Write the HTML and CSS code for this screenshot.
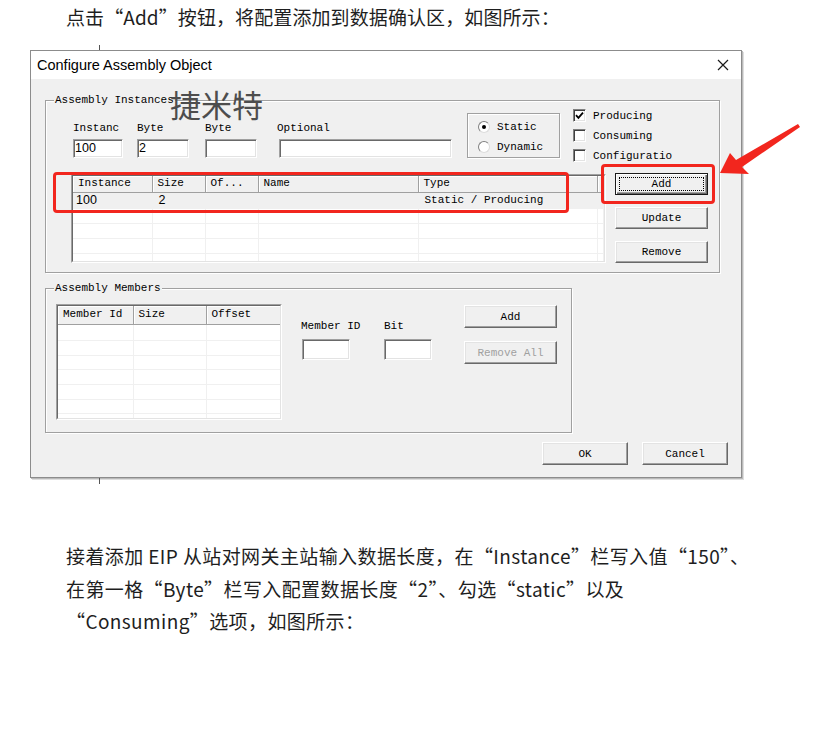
FILE: index.html
```html
<!DOCTYPE html>
<html lang="zh-CN">
<head>
<meta charset="utf-8">
<title>Configure Assembly Object</title>
<link rel="stylesheet" href="styles.css">
</head>
<body>
<div class="page">
  <p class="para para-top">点击“Add”按钮，将配置添加到数据确认区，如图所示：</p>

  <div class="dialog">
    <div class="titlebar">
      <span class="title">Configure Assembly Object</span>
      <svg class="close" width="12" height="12" viewBox="0 0 12 12"><path d="M1 1 L11 11 M11 1 L1 11" stroke="#1a1a1a" stroke-width="1.2" fill="none"/></svg>
    </div>
    <div class="dlg-body">
      <div class="group group-inst">
        <span class="group-title">Assembly Instances</span>
        <div class="inst-top">
          <div class="field f-inst"><span class="lbl">Instanc</span><div class="edit">100</div></div>
          <div class="field f-byte1"><span class="lbl">Byte</span><div class="edit">2</div></div>
          <div class="field f-byte2"><span class="lbl">Byte</span><div class="edit"></div></div>
          <div class="field f-opt"><span class="lbl">Optional</span><div class="edit"></div></div>
          <div class="radio-box">
            <div class="radio-row"><span class="radio checked"></span><span class="rlabel">Static</span></div>
            <div class="radio-row"><span class="radio"></span><span class="rlabel">Dynamic</span></div>
          </div>
          <div class="checks">
            <div class="check-row"><span class="checkbox"><svg width="9" height="9" viewBox="0 0 9 9"><path d="M1 4.2 L3.4 6.8 L8 1.6" stroke="#000" stroke-width="1.8" fill="none"/></svg></span><span>Producing</span></div>
            <div class="check-row"><span class="checkbox"></span><span>Consuming</span></div>
            <div class="check-row"><span class="checkbox"></span><span>Configuratio</span></div>
          </div>
        </div>
        <div class="inst-bottom">
          <div class="listview lv-inst">
            <div class="lv-inner">
              <table class="lv-table">
                <colgroup><col class="c-i1"><col class="c-i2"><col class="c-i3"><col class="c-i4"><col class="c-i5"><col></colgroup>
                <thead><tr><th class="first">Instance</th><th>Size</th><th>Of...</th><th>Name</th><th>Type</th><th></th></tr></thead>
                <tbody>
                  <tr class="sel r-first"><td class="first num">100</td><td class="num">2</td><td></td><td></td><td>Static / Producing</td><td></td></tr>
                  <tr><td class="first"></td><td></td><td></td><td></td><td></td><td></td></tr>
                  <tr><td class="first"></td><td></td><td></td><td></td><td></td><td></td></tr>
                  <tr><td class="first"></td><td></td><td></td><td></td><td></td><td></td></tr>
                  <tr><td class="first"></td><td></td><td></td><td></td><td></td><td></td></tr>
                </tbody>
              </table>
            </div>
          </div>
          <div class="btn-col">
            <button class="btn btn-default">Add<span class="focus-rect"></span></button>
            <button class="btn">Update</button>
            <button class="btn">Remove</button>
          </div>
        </div>
      </div>

      <div class="group group-mem">
        <span class="group-title">Assembly Members</span>
        <div class="mem-content">
          <div class="listview lv-mem">
            <div class="lv-inner">
              <table class="lv-table mem-table">
                <colgroup><col class="c-m1"><col class="c-m2"><col class="c-m3"></colgroup>
                <thead><tr><th class="first">Member Id</th><th>Size</th><th>Offset</th></tr></thead>
                <tbody>
                  <tr class="r-first"><td></td><td></td><td></td></tr>
                  <tr><td></td><td></td><td></td></tr>
                  <tr><td></td><td></td><td></td></tr>
                  <tr><td></td><td></td><td></td></tr>
                  <tr><td></td><td></td><td></td></tr>
                  <tr><td></td><td></td><td></td></tr>
                  <tr><td></td><td></td><td></td></tr>
                </tbody>
              </table>
            </div>
          </div>
          <div class="mem-fields">
            <div class="field f-mid"><span class="lbl">Member ID</span><div class="edit"></div></div>
            <div class="field f-bit"><span class="lbl">Bit</span><div class="edit"></div></div>
          </div>
          <div class="mem-btns">
            <button class="btn">Add</button>
            <button class="btn btn-disabled">Remove All</button>
          </div>
        </div>
      </div>

      <div class="dlg-buttons">
        <button class="btn btn-wide">OK</button>
        <button class="btn btn-wide">Cancel</button>
      </div>
    </div>
  </div>

  <p class="para para-bottom">接着添加 EIP 从站对网关主站输入数据长度，在“Instance”栏写入值“150”、<br>在第一格“Byte”栏写入配置数据长度“2”、勾选“static”以及<br>“Consuming”选项，如图所示：</p>

  <div class="watermark">捷米特</div>
  <div class="redbox rb-table"></div>
  <div class="redbox rb-add"></div>
  <svg class="arrow" width="110" height="70" viewBox="700 115 110 70">
    <polygon points="720,173 730,153 736,160 798,124 800,127 742,167 749,174" fill="#f2261e"/>
  </svg>
</div>
</body>
</html>
```

FILE: styles.css
```css
* { box-sizing: border-box; }
html, body { margin: 0; padding: 0; background: #fff; }
body { font-family: "Noto Sans CJK SC", "Noto Sans", sans-serif; }

.page { position: relative; width: 817px; height: 745px; overflow: hidden; }

.para {
  margin: 0;
  padding-left: 66px;
  font-family: "Noto Sans CJK SC", sans-serif;
  font-size: 19px;
  line-height: 33px;
  color: #1e1e1e;
  white-space: nowrap;
}
.para-top { height: 33px; letter-spacing: 0.1px; }
.para-bottom { margin-top: 62px; line-height: 32.5px; letter-spacing: 0.4px; }

/* dialog */
.dialog {
  position: relative;
  margin: 17px 0 0 30px;
  width: 712px;
  height: 428px;
  border: 1px solid #8c8c8c;
  box-shadow: 1px 1px 0 #b9b9b9, 2px 2px 0 #dedede;
  background: #f0f0f0;
  font-family: "Liberation Mono", monospace;
  font-size: 11px;
  color: #000;
}
.dialog::before, .dialog::after {
  content: "";
  position: absolute;
  left: 68px;
  width: 1px;
  background: #555;
}
.dialog::before { top: -6px; height: 5px; }
.dialog::after { bottom: -7px; height: 6px; }

.titlebar {
  height: 28px;
  background: #fff;
  display: flex;
  align-items: center;
  justify-content: space-between;
  padding: 0 12px 0 6px;
}
.title { font-family: "Liberation Sans", Arial, sans-serif; font-size: 14.5px; color: #000; }
.close { display: block; }

.dlg-body { padding: 21px 0 0 14px; }

.group {
  position: relative;
  border: 1px solid #a0a0a0;
  box-shadow: inset 1px 1px 0 #fff, 1px 1px 0 #fff;
}
.group-title {
  position: absolute;
  top: -7px;
  left: 8px;
  padding: 0 1px;
  background: #f0f0f0;
  line-height: 12px;
  white-space: nowrap;
}
.group-inst { width: 675px; height: 173px; }
.group-mem { width: 527px; height: 145px; margin-top: 15px; }

.inst-top {
  display: flex;
  align-items: flex-start;
  margin-top: 8px;
  padding-left: 27px;
  height: 54px;
}
.field { display: flex; flex-direction: column; }
.lbl { margin-top: 13px; height: 12px; line-height: 12px; white-space: nowrap; }
.edit {
  margin-top: 5px;
  height: 19px;
  background: #fff;
  border: 1px solid;
  border-color: #a0a0a0 #fff #fff #a0a0a0;
  box-shadow: inset 1px 1px 0 #696969, inset -1px -1px 0 #e3e3e3;
  font-family: "Liberation Sans", Arial, sans-serif;
  font-size: 12.5px;
  line-height: 17px;
  padding-left: 1px;
}
.f-inst { width: 50px; }
.f-byte1 { width: 52px; margin-left: 14px; }
.f-byte2 { width: 52px; margin-left: 16px; }
.f-opt { width: 173px; margin-left: 22px; }
.f-opt .lbl { margin-left: -2px; }

.radio-box {
  margin-left: 15px;
  margin-top: 4px;
  width: 93px;
  height: 45px;
  border: 1px solid #a0a0a0;
  box-shadow: inset 1px 1px 0 #fff, 1px 1px 0 #fff;
  padding: 7px 0 0 10px;
  display: flex;
  flex-direction: column;
  gap: 8px;
}
.radio-row { display: flex; align-items: center; height: 12px; gap: 7px; white-space: nowrap; }
.radio {
  position: relative;
  width: 12px;
  height: 12px;
  border-radius: 50%;
  background: #fff;
  border: 1px solid;
  border-color: #808080 #dcdcdc #dcdcdc #808080;
  flex: none;
}
.radio.checked::after {
  content: "";
  position: absolute;
  left: 3px;
  top: 3px;
  width: 4px;
  height: 4px;
  border-radius: 50%;
  background: #000;
}

.checks { margin-left: 13px; display: flex; flex-direction: column; gap: 7px; }
.check-row { display: flex; align-items: center; height: 13px; gap: 7px; white-space: nowrap; }
.checkbox {
  width: 13px;
  height: 13px;
  flex: none;
  background: #fff;
  border: 1px solid;
  border-color: #808080 #fff #fff #808080;
  box-shadow: inset 1px 1px 0 #404040, inset -1px -1px 0 #e3e3e3;
  display: flex;
  align-items: center;
  justify-content: center;
}
.checkbox svg { display: block; }

.inst-bottom { display: flex; align-items: flex-start; margin-top: 10px; padding-left: 25px; }
.lv-inst { margin-top: 1px; width: 535px; height: 89px; }
.btn-col { margin-left: 9px; display: flex; flex-direction: column; gap: 12px; }
.btn-col .btn { width: 93px; height: 22px; }

.listview {
  background: #fff;
  border: 1px solid;
  border-color: #a0a0a0 #fff #fff #a0a0a0;
}
.lv-inner {
  height: 100%;
  overflow: hidden;
  border: 1px solid;
  border-color: #696969 #e3e3e3 #e3e3e3 #696969;
}
.lv-table { width: 100%; border-collapse: collapse; table-layout: fixed; }
.lv-table th {
  height: 16px;
  padding: 0 0 0 5px;
  background: #f0f0f0;
  font-weight: normal;
  text-align: left;
  line-height: 15px;
  white-space: nowrap;
  overflow: hidden;
  border-right: 1px solid #a0a0a0;
  border-bottom: 1px solid #a0a0a0;
  box-shadow: inset 1px 1px 0 #fff;
}
.lv-table td {
  height: 15px;
  padding: 0 0 0 6px;
  border-right: 1px solid #f0f0f0;
  border-bottom: 1px solid #f0f0f0;
  white-space: nowrap;
  overflow: hidden;
  line-height: 14px;
}
.lv-table td.first { padding-left: 3px; }
.lv-table tr.r-first td { height: 16px; }
.lv-table tr.sel td { background: #f0f0f0; }
.lv-table td.num { font-family: "Liberation Sans", Arial, sans-serif; font-size: 12.5px; }
.c-i1 { width: 79px; }
.c-i2 { width: 53px; }
.c-i3 { width: 53px; }
.c-i4 { width: 160px; }
.c-i5 { width: 179px; }

.mem-content { display: flex; align-items: flex-start; padding: 15px 0 0 10px; }
.lv-mem { width: 226px; height: 116px; }
.mem-table th { height: 18px; line-height: 17px; }
.mem-table td { height: 14.6px; }
.mem-table tr.r-first td { height: 16.7px; }
.c-m1 { width: 75px; }
.c-m2 { width: 73px; }
.c-m3 { width: 74px; }

.mem-fields { display: flex; margin-left: 19px; }
.mem-fields .lbl { margin-top: 16px; }
.mem-fields .edit { margin-top: 7px; height: 21px; width: 48px; }
.f-mid { width: 49px; }
.f-mid .edit { margin-left: 1px; }
.f-bit { margin-left: 34px; width: 48px; }
.mem-btns { margin-left: 32px; margin-top: 1px; display: flex; flex-direction: column; gap: 13px; }
.mem-btns .btn { width: 93px; height: 23px; }

.dlg-buttons { display: flex; justify-content: flex-end; gap: 14px; margin-top: 9px; padding-right: 13px; }
.btn-wide { width: 86px; height: 23px; }

.btn {
  position: relative;
  font-family: "Liberation Mono", monospace;
  font-size: 11px;
  color: #000;
  background: #f0f0f0;
  border: 1px solid;
  border-color: #fff #696969 #696969 #fff;
  box-shadow: inset -1px -1px 0 #a0a0a0, inset 1px 1px 0 #e3e3e3;
  padding: 0;
  display: flex;
  align-items: center;
  justify-content: center;
}
.btn-default {
  border-color: #1a1a1a;
  box-shadow: inset 1px 1px 0 #fff, inset -1px -1px 0 #696969, inset -2px -2px 0 #a0a0a0;
}
.focus-rect {
  position: absolute;
  left: 3px;
  top: 3px;
  right: 3px;
  bottom: 3px;
  border: 1px dotted #000;
}
.btn-disabled { color: #a0a0a0; }

/* annotations */
.watermark {
  position: absolute;
  left: 170px;
  top: 88px;
  font-family: "Noto Sans CJK SC", sans-serif;
  font-size: 31px;
  line-height: 1;
  color: #4d4d4d;
}
.redbox {
  position: absolute;
  border: 3px solid #f2261e;
  border-radius: 4px;
}
.rb-table { left: 53px; top: 172px; width: 516px; height: 41px; }
.rb-add { left: 601px; top: 164px; width: 114px; height: 40px; }
.arrow { position: absolute; left: 700px; top: 115px; }
```
